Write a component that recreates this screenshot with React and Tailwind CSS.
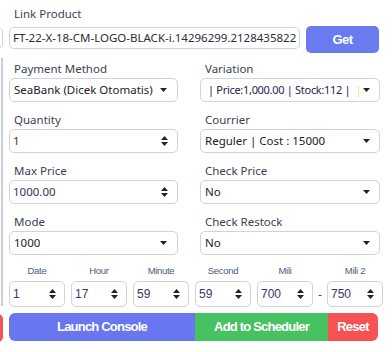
import React from "react";

const font = { fontFamily: '"Noto Sans", "Open Sans", sans-serif' };
const btnFont = { fontFamily: '"Liberation Sans", Arial, sans-serif' };

function Caret() {
  return (
    <svg width="7" height="4" viewBox="0 0 7 4" className="shrink-0">
      <path d="M0 0 L7 0 L3.5 4 Z" fill="#222" />
    </svg>
  );
}

function Spin() {
  return (
    <svg width="7" height="12" viewBox="0 0 7 12" className="shrink-0">
      <path d="M3.5 1 L7 5 L0 5 Z" fill="#222" />
      <path d="M0 7 L7 7 L3.5 11 Z" fill="#222" />
    </svg>
  );
}

function Label({ children }) {
  return (
    <div className="h-[17px] pl-[5px] text-[11.5px] leading-[15px] text-[#3a3f52]">{children}</div>
  );
}

function SelectBox({ children, w, pr = "pr-[9px]" }) {
  return (
    <div className={`h-[24px] ${w} flex items-center justify-between gap-[2px] rounded-[5px] border border-[#cfd3da] bg-white pl-[4px] ${pr} overflow-hidden`}>
      <div className="min-w-0 text-[11.5px] text-[#1b1b2b] whitespace-nowrap overflow-hidden">{children}</div>
      <Caret />
    </div>
  );
}

function NumBox({ value, w }) {
  return (
    <div className={`h-[24px] ${w} flex items-center justify-between rounded-[5px] border border-[#cfd3da] bg-white pl-[3px] pr-[9px]`}>
      <div className="text-[11.5px] text-[#3a2d5e] whitespace-nowrap">{value}</div>
      <Spin />
    </div>
  );
}

function Small({ value }) {
  return (
    <div className="h-[26px] w-[56px] shrink-0 flex items-center justify-between rounded-[5px] border border-[#cfd3da] bg-white pl-[3px] pr-[8px]">
      <div style={btnFont} className="text-[12px] text-[#3a3566]">{value}</div>
      <Spin />
    </div>
  );
}

function SmallLabel({ children }) {
  return (
    <div style={btnFont} className="w-[56px] shrink-0 text-center text-[9.5px] tracking-[-0.3px] text-[#4a5b7e]">{children}</div>
  );
}

export default function App() {
  return (
    <div style={font} className="relative w-[392px] h-[352px] overflow-hidden bg-white">
      {/* clipped fragments on the left edge */}
      <div className="absolute left-[-20px] top-[27px] h-[22px] w-[23px] rounded-[5px] border border-[#cfd3da]" />
      <div className="absolute left-[-20px] top-[58px] h-[248px] w-[23px] border-r-2 border-[#c8cde0]" />
      <div className="absolute left-[-20px] top-[314px] h-[28px] w-[23px] rounded-[5px] bg-[#f55353]" />

      <div className="pl-[9px] pt-[6px]">
        <Label>Link Product</Label>
        <div className="flex items-start mt-[3px]">
          <div className="mt-px h-[22px] w-[291px] flex items-center rounded-[5px] border border-[#cfd3da] bg-white pl-[3px] overflow-hidden">
            <span className="text-[11.5px] text-[#2c2c3c] whitespace-nowrap">FT-22-X-18-CM-LOGO-BLACK-i.14296299.2128435822</span>
          </div>
          <div style={btnFont} className="ml-[6px] h-[27px] w-[73px] rounded-[5px] bg-[#6a7bf0] flex items-center justify-center text-white font-bold text-[13px] tracking-[-0.5px]">Get</div>
        </div>

        <div className="mt-[8px] flex gap-[22px]">
          <div className="w-[169px] flex flex-col gap-[10px]">
            <div>
              <Label>Payment Method</Label>
              <SelectBox w="w-[169px]" pr="pr-[10px]">SeaBank (Dicek Otomatis)</SelectBox>
            </div>
            <div>
              <Label>Quantity</Label>
              <NumBox value="1" w="w-[169px]" />
            </div>
            <div>
              <Label>Max Price</Label>
              <NumBox value="1000.00" w="w-[169px]" />
            </div>
            <div>
              <Label>Mode</Label>
              <SelectBox w="w-[169px]" pr="pr-[10px]">1000</SelectBox>
            </div>
          </div>
          <div className="w-[180px] flex flex-col gap-[10px]">
            <div>
              <Label>Variation</Label>
              <SelectBox w="w-[180px]">
                <span className="ml-[3px] text-[11px] tracking-[-0.3px] text-[#2b1a4a]">| Price:1,000.00 | Stock:112 |</span>
                <span className="ml-[5px] text-[#f1e27a]">|</span>
              </SelectBox>
            </div>
            <div>
              <Label>Courrier</Label>
              <SelectBox w="w-[180px]">Reguler | Cost : 15000</SelectBox>
            </div>
            <div>
              <Label>Check Price</Label>
              <SelectBox w="w-[180px]">No</SelectBox>
            </div>
            <div>
              <Label>Check Restock</Label>
              <SelectBox w="w-[180px]">No</SelectBox>
            </div>
          </div>
        </div>

        <div className="mt-[8px] flex gap-[6px] h-[16px] items-center">
          <SmallLabel>Date</SmallLabel>
          <SmallLabel>Hour</SmallLabel>
          <SmallLabel>Minute</SmallLabel>
          <SmallLabel>Second</SmallLabel>
          <SmallLabel>Mili</SmallLabel>
          <div className="w-[2px] min-w-0 shrink-0" />
          <SmallLabel>Mili 2</SmallLabel>
        </div>
        <div className="mt-[2px] flex gap-[6px] items-center">
          <Small value="1" />
          <Small value="17" />
          <Small value="59" />
          <Small value="59" />
          <Small value="700" />
          <div className="w-[2px] min-w-0 shrink-0 flex justify-center overflow-visible">
            <span className="text-[11px] text-[#333] whitespace-nowrap">-</span>
          </div>
          <Small value="750" />
        </div>

        <div style={btnFont} className="mt-[6px] flex h-[28px] w-[369px] text-white font-bold text-[13px] tracking-[-0.8px]">
          <div className="w-[186px] rounded-l-[6px] bg-[#6876ef] flex items-center justify-center">Launch Console</div>
          <div className="w-[133px] bg-[#47c262] flex items-center justify-center">Add to Scheduler</div>
          <div className="w-[50px] rounded-r-[6px] bg-[#f55353] flex items-center justify-center">Reset</div>
        </div>
      </div>
    </div>
  );
}
